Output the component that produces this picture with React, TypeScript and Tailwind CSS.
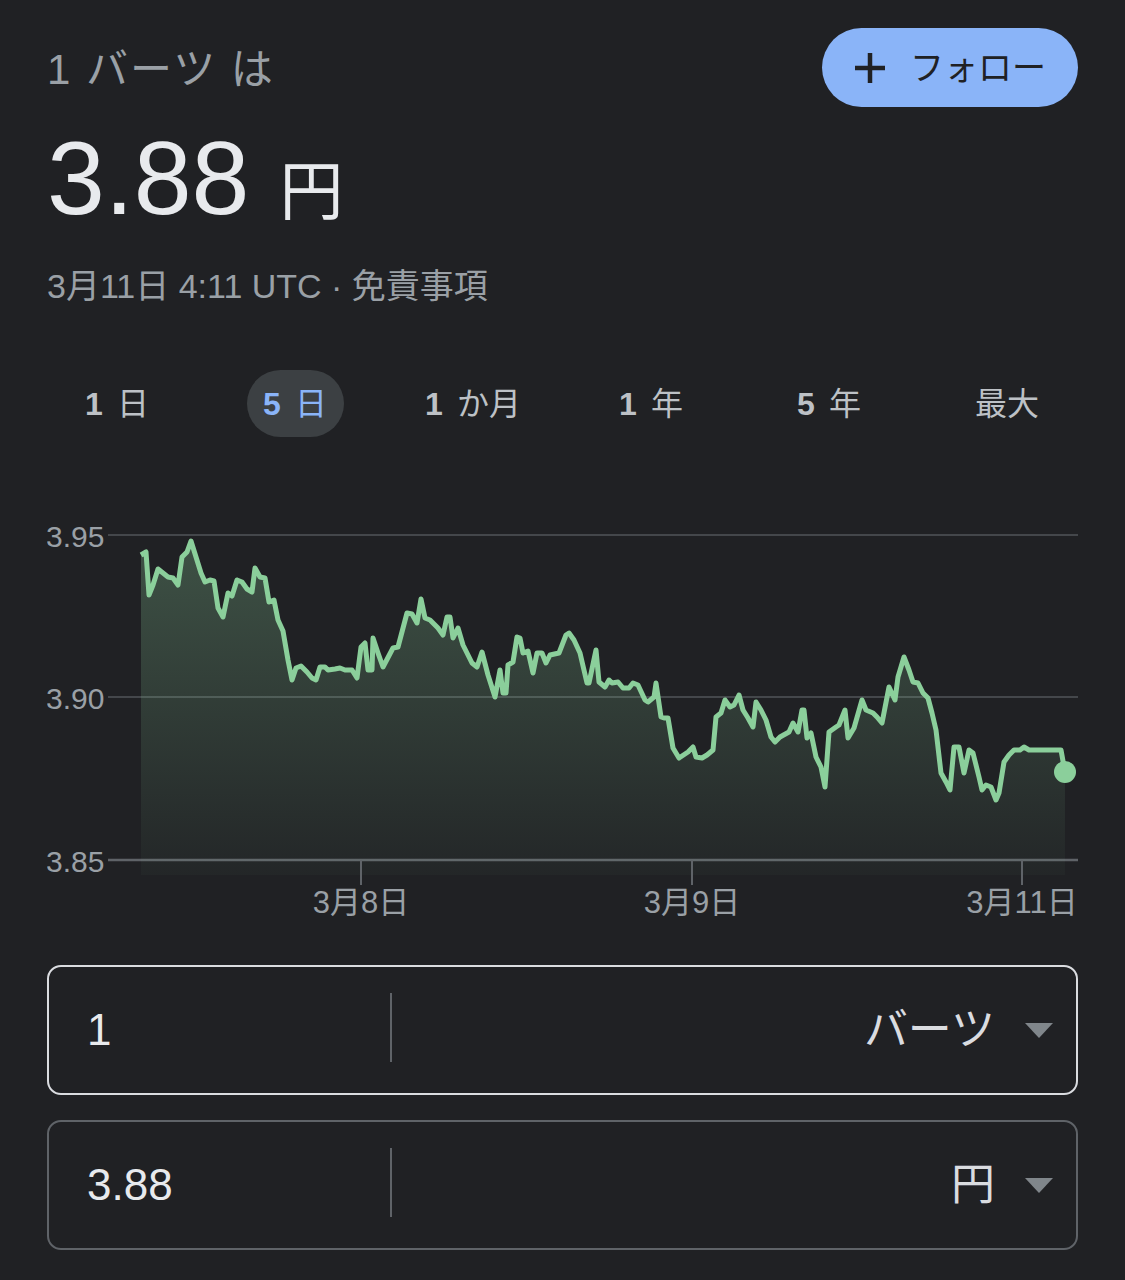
import React from "react";

const FONT = { fontFamily: '"Liberation Sans", "Noto Sans CJK JP", sans-serif' };

// price line, page coordinates (x, y)
const points: [number, number][] = [
  [141, 555], [146, 552], [149, 595], [153, 585], [158, 569], [163, 573], [168, 577], [173, 578],
  [178, 585], [182, 557], [187, 552], [191, 541], [196, 557], [201, 573], [205, 582], [210, 580],
  [214, 581], [218, 608], [223, 617], [228, 593], [232, 596], [237, 580], [242, 582], [247, 589],
  [252, 592], [255, 568], [260, 577], [265, 578], [269, 602], [274, 600], [278, 620], [283, 631],
  [288, 660], [292, 680], [296, 668], [301, 666], [307, 672], [312, 678], [316, 680], [320, 667],
  [325, 667], [328, 670], [335, 669], [340, 668], [345, 670], [352, 670], [357, 678], [361, 647],
  [365, 643], [368, 670], [372, 670], [373, 638], [378, 653], [383, 667], [393, 648], [398, 647],
  [407, 613], [412, 614], [417, 623], [421, 599], [425, 618], [430, 620], [438, 628], [443, 635],
  [447, 617], [450, 617], [453, 638], [458, 628], [463, 645], [472, 663], [477, 667], [482, 652],
  [488, 675], [495, 697], [500, 670], [503, 693], [506, 693], [508, 665], [513, 662], [517, 637],
  [520, 638], [523, 653], [528, 651], [533, 673], [537, 653], [542, 653], [546, 663], [550, 655],
  [559, 653], [566, 635], [569, 633], [574, 640], [580, 653], [587, 683], [589, 683], [596, 650],
  [599, 682], [605, 687], [609, 680], [612, 683], [618, 682], [623, 688], [629, 688], [633, 683],
  [638, 685], [645, 700], [648, 702], [654, 697], [656, 683], [661, 717], [664, 718], [668, 718],
  [673, 748], [679, 758], [688, 752], [693, 747], [696, 757], [702, 758], [707, 755], [713, 750],
  [716, 717], [721, 713], [725, 700], [730, 707], [734, 705], [739, 695], [743, 710], [748, 718],
  [753, 727], [756, 702], [761, 710], [766, 720], [771, 737], [775, 742], [780, 737], [789, 732],
  [793, 723], [798, 732], [802, 710], [804, 710], [807, 738], [811, 733], [816, 757], [821, 767],
  [825, 787], [829, 732], [836, 727], [839, 725], [845, 710], [848, 738], [854, 728], [862, 700],
  [866, 710], [873, 713], [877, 717], [882, 723], [889, 687], [895, 700], [898, 677], [904, 657],
  [909, 670], [913, 682], [918, 683], [923, 693], [928, 698], [932, 713], [936, 730], [941, 773],
  [946, 782], [950, 790], [954, 747], [959, 747], [964, 773], [969, 750], [973, 753], [979, 777],
  [982, 790], [986, 785], [991, 787], [996, 800], [999, 793], [1004, 762], [1009, 755], [1014, 750],
  [1020, 750], [1024, 747], [1029, 750], [1043, 750], [1061, 750], [1065, 772],
];

const tabs = [
  { num: "1", label: "日" },
  { num: "5", label: "日", active: true },
  { num: "1", label: "か月" },
  { num: "1", label: "年" },
  { num: "5", label: "年" },
  { num: "", label: "最大" },
];

function Chart() {
  const line = points.map(([x, y], i) => `${i ? "L" : "M"}${x} ${y}`).join(" ");
  const area = `${line} L1065 875 L141 875 Z`;
  const grid = [
    { y: 535, label: "3.95" },
    { y: 697, label: "3.90" },
    { y: 860, label: "3.85" },
  ];
  const ticks = [
    { x: 361, label: "3月8日" },
    { x: 692, label: "3月9日" },
    { x: 1022, label: "3月11日" },
  ];

  return (
    <svg width="1031" height="415" viewBox="47 510 1031 415" className="block" style={FONT}>
      <defs>
        <linearGradient id="fill" x1="0" y1="0" x2="0" y2="1">
          <stop offset="0%" stopColor="#8bcf9b" stopOpacity="0.28" />
          <stop offset="100%" stopColor="#8bcf9b" stopOpacity="0.03" />
        </linearGradient>
      </defs>
      {grid.map((g) => (
        <g key={g.label}>
          <line
            x1="108"
            x2="1078"
            y1={g.y}
            y2={g.y}
            stroke={g.y === 860 ? "#5f6368" : "#44474b"}
            strokeWidth={g.y === 860 ? 2.5 : 2}
          />
          <text x="46" y={g.y + 12} fontSize="30" fill="#9aa0a6">
            {g.label}
          </text>
        </g>
      ))}
      <path d={area} fill="url(#fill)" />
      <path d={line} fill="none" stroke="#8bcf9b" strokeWidth="5" strokeLinejoin="round" />
      <circle cx="1065" cy="772" r="11" fill="#8bcf9b" />
      {ticks.map((t) => (
        <g key={t.label}>
          <line x1={t.x} x2={t.x} y1="860" y2="885" stroke="#5f6368" strokeWidth="2" />
          <text x={t.x} y="913" fontSize="31" fill="#9aa0a6" textAnchor="middle">
            {t.label}
          </text>
        </g>
      ))}
    </svg>
  );
}

function Caret() {
  return (
    <svg width="28" height="15" viewBox="0 0 28 15">
      <polygon points="0,0 28,0 14,15" fill="#80868b" />
    </svg>
  );
}

function ConvertBox({ value, unit, focused }: { value: string; unit: string; focused?: boolean }) {
  return (
    <div
      className={
        focused
          ? "flex h-[130px] items-center rounded-[14px] border-2 border-[#dadce0]"
          : "flex h-[130px] items-center rounded-[14px] border-2 border-[#5f6368]"
      }
    >
      <div className="w-[341px] pl-[38px] text-[44px] leading-none text-[#e8eaed]">{value}</div>
      <div className="mb-[5px] h-[69px] w-[2px] bg-[#5f6368]" />
      <div className="flex flex-1 items-center justify-end gap-[30px] pr-[23px]">
        <span className="text-[44px] leading-none text-[#dadce0]">{unit}</span>
        <Caret />
      </div>
    </div>
  );
}

export default function App() {
  return (
    <div className="min-h-[1280px] bg-[#202124] px-[47px]" style={FONT}>
      {/* Header */}
      <div className="flex items-center justify-between pt-[28px]">
        <h1 className="mt-[4px] text-[42px] leading-none tracking-[2px] text-[#9aa0a6]">1 バーツ は</h1>
        <button className="flex h-[79px] w-[256px] items-center justify-center gap-[24px] rounded-full bg-[#8ab4f8]">
          <svg width="32" height="32" viewBox="0 0 32 32">
            <path d="M16 1v30M1 16h30" stroke="#202124" strokeWidth="4.5" />
          </svg>
          <span className="text-[34px] leading-none text-[#202124]">フォロー</span>
        </button>
      </div>

      {/* Price */}
      <div className="mt-[19px] flex items-baseline">
        <span className="text-[104px] leading-none text-[#e8eaed]">3.88</span>
        <span className="ml-[30px] text-[64px] leading-none text-[#e8eaed]">円</span>
      </div>
      <p className="mt-[39px] text-[34px] leading-none text-[#9aa0a6]">3月11日 4:11 UTC · 免責事項</p>

      {/* Range tabs */}
      <div className="mt-[67px] -ml-[19px] -mr-[18px] grid grid-cols-6">
        {tabs.map((t, i) => (
          <div key={i} className="flex h-[67px] items-center justify-center">
            <div
              className={
                t.active
                  ? "flex h-[67px] w-[97px] items-center justify-center rounded-full bg-[#3c4043] text-[32px] text-[#8ab4f8]"
                  : "flex h-[67px] items-center justify-center text-[32px] text-[#bdc1c6]"
              }
            >
              {t.num && <span className="mr-[14px] font-bold">{t.num}</span>}
              <span>{t.label}</span>
            </div>
          </div>
        ))}
      </div>

      {/* Chart */}
      <div className="mt-[73px]">
        <Chart />
      </div>

      {/* Converter */}
      <div className="mt-[40px] flex flex-col gap-[25px]">
        <ConvertBox value="1" unit="バーツ" focused />
        <ConvertBox value="3.88" unit="円" />
      </div>
    </div>
  );
}
